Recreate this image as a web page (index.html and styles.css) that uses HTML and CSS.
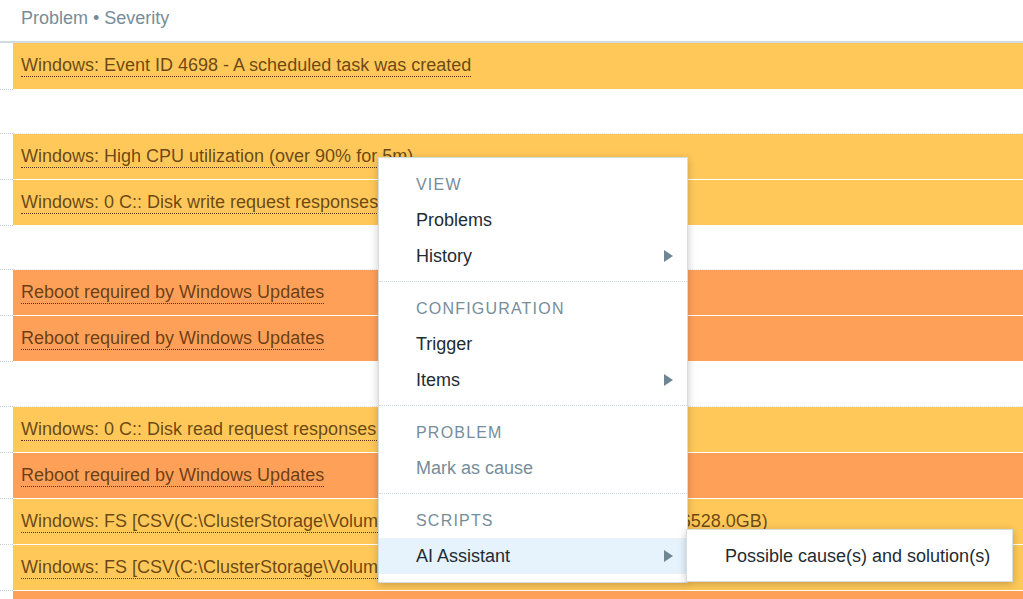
FILE: index.html
```html
<!DOCTYPE html>
<html lang="en">
<head>
<meta charset="utf-8">
<title>Problems</title>
<link rel="stylesheet" href="styles.css">
</head>
<body>
<div class="page">
  <div class="head">Problem • Severity</div>
  <div class="rows">
    <div class="row warn first"><div class="gap"></div><div class="cell"><span class="link">Windows: Event ID 4698 - A scheduled task was created</span></div></div>
    <div class="row empty"><div class="gap"></div><div class="cell"></div></div>
    <div class="row warn"><div class="gap"></div><div class="cell"><span class="link">Windows: High CPU utilization (over 90% for 5m)</span></div></div>
    <div class="row warn"><div class="gap"></div><div class="cell"><span class="link">Windows: 0 C:: Disk write request responses are too high (write &gt; 20 ms for 15m)</span></div></div>
    <div class="row empty"><div class="gap"></div><div class="cell"></div></div>
    <div class="row avg"><div class="gap"></div><div class="cell"><span class="link">Reboot required by Windows Updates</span></div></div>
    <div class="row avg"><div class="gap"></div><div class="cell"><span class="link">Reboot required by Windows Updates</span></div></div>
    <div class="row empty tall"><div class="gap"></div><div class="cell"></div></div>
    <div class="row warn"><div class="gap"></div><div class="cell"><span class="link">Windows: 0 C:: Disk read request responses are too high (read &gt; 20 ms for 15m)</span></div></div>
    <div class="row avg"><div class="gap"></div><div class="cell"><span class="link">Reboot required by Windows Updates</span></div></div>
    <div class="row warn"><div class="gap"></div><div class="cell"><span class="link">Windows: FS [CSV(C:\ClusterStorage\Volume1\)]: Space is low (used &gt; 80%, total 6528.0GB)</span></div></div>
    <div class="row warn"><div class="gap"></div><div class="cell"><span class="link">Windows: FS [CSV(C:\ClusterStorage\Volume2\)]: Space is low (used &gt; 80%, total 6528.0GB)</span></div></div>
    <div class="row avg"><div class="gap"></div><div class="cell"><span class="link">Reboot required by Windows Updates</span></div></div>
  </div>

  <div class="menu">
    <div class="section">
      <div class="menu-head">View</div>
      <div class="menu-item">Problems</div>
      <div class="menu-item has-sub">History</div>
    </div>
    <div class="section">
      <div class="menu-head">Configuration</div>
      <div class="menu-item">Trigger</div>
      <div class="menu-item has-sub">Items</div>
    </div>
    <div class="section">
      <div class="menu-head">Problem</div>
      <div class="menu-item disabled">Mark as cause</div>
    </div>
    <div class="section">
      <div class="menu-head">Scripts</div>
      <div class="menu-item has-sub active">AI Assistant</div>
    </div>
  </div>

  <div class="submenu">
    <div class="menu-item sub-item">Possible cause(s) and solution(s)</div>
  </div>
</div>
</body>
</html>
```

FILE: styles.css
```css
html, body {
  margin: 0;
  padding: 0;
  background: #ffffff;
}

body {
  font-family: "Liberation Sans", Arial, sans-serif;
  font-size: 18px;
  color: #1f2c33;
  overflow: hidden;
}

.page {
  position: relative;
  width: 1023px;
  height: 599px;
  overflow: hidden;
}

.head {
  height: 41px;
  line-height: 36px;
  padding-left: 21px;
  color: #768d99;
  border-bottom: 2px solid #d3d9e1;
}

.rows {
  display: flex;
  flex-direction: column;
}

.row {
  display: flex;
  height: 46px;
  flex-shrink: 0;
}

.row.first {
  height: 47px;
}

.row.empty {
  height: 44px;
}

.row.empty.tall {
  height: 45px;
}

.gap {
  width: 13px;
  flex-shrink: 0;
  background: #ffffff;
  border-bottom: 1px dotted #c4ccd4;
}

.cell {
  flex: 1;
  display: flex;
  align-items: center;
  padding-left: 8px;
  white-space: nowrap;
  overflow: hidden;
  border-bottom: 1px solid #ffffff;
}

.row.empty .cell {
  border-bottom: 1px dotted #e3e7eb;
}

.row.warn .cell {
  background: #ffc859;
}

.row.avg .cell {
  background: #ffa059;
}

.link {
  color: rgba(66, 36, 0, 0.78);
  border-bottom: 1px dotted rgba(40, 20, 0, 0.8);
}

/* Context menu */
.menu {
  position: absolute;
  left: 378px;
  top: 157px;
  width: 308px;
  background: #ffffff;
  border: 1px solid #d5dde3;
  box-shadow: 0 2px 8px rgba(0, 0, 0, 0.22);
}

.section {
  padding: 8px 0 7px;
  border-top: 1px dotted #cfdbe2;
}

.section:first-child {
  border-top: none;
}

.section:last-child {
  padding-bottom: 8px;
}

.menu-head {
  height: 36px;
  line-height: 38px;
  padding-left: 37px;
  font-size: 16px;
  letter-spacing: 1.2px;
  text-transform: uppercase;
  color: #768d99;
}

.menu-item {
  position: relative;
  height: 36px;
  line-height: 36px;
  padding-left: 37px;
  color: #1f2c33;
  white-space: nowrap;
}

.menu-item.disabled {
  color: #768d99;
}

.menu-item.active {
  background: #e6f3fd;
}

.menu-item.has-sub::after {
  content: "";
  position: absolute;
  right: 14px;
  top: 12px;
  width: 0;
  height: 0;
  border-left: 9px solid #6f8794;
  border-top: 6px solid transparent;
  border-bottom: 6px solid transparent;
}

.submenu {
  position: absolute;
  left: 686px;
  top: 529px;
  width: 325px;
  padding: 8px 0 7px;
  background: #ffffff;
  border: 1px solid #d5dde3;
  box-shadow: 0 2px 8px rgba(0, 0, 0, 0.22);
}

.sub-item {
  padding-left: 38px;
}
```
